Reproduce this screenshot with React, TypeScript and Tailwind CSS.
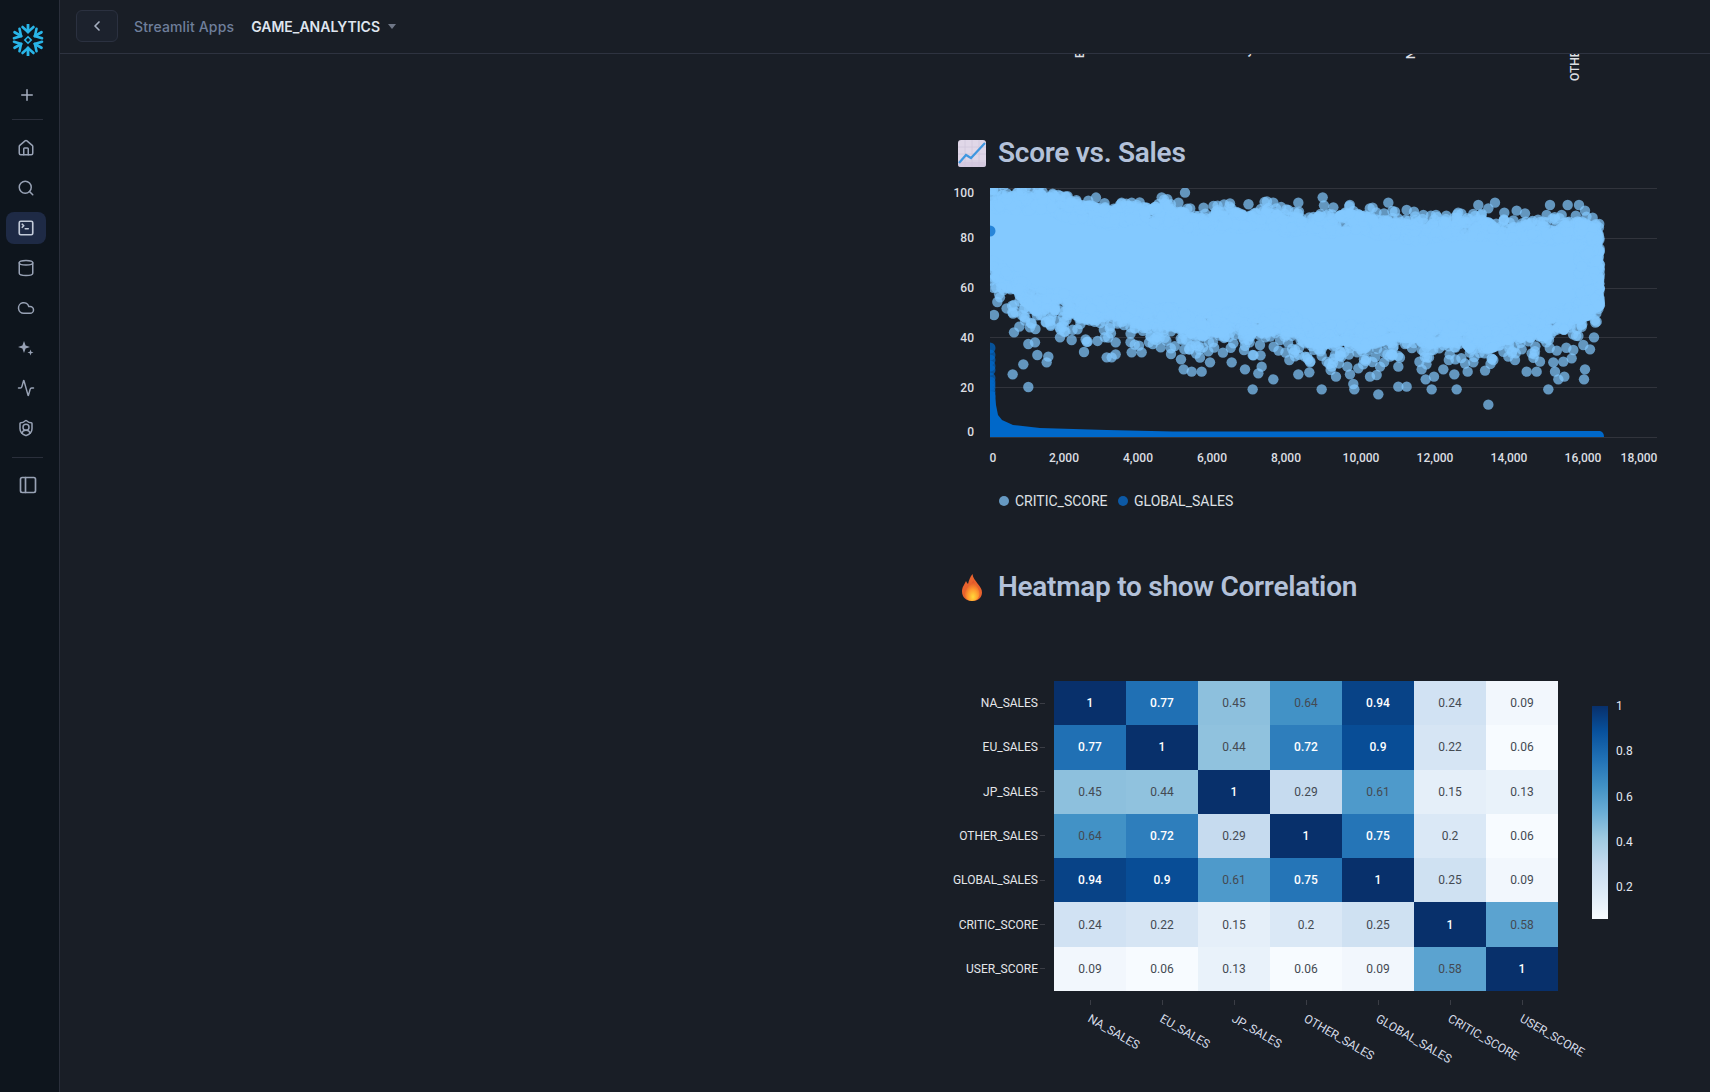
import { Activity, ChevronLeft, Cloud, Cylinder, House, PanelLeft, Plus, Search, ShieldUser, SquareTerminal } from "lucide-react"

// seeded so the cloud comes out the same on every load
function makeRandom(seed: number) {
	return () => {
		seed |= 0
		seed = (seed + 0x6d2b79f5) | 0
		let t = Math.imul(seed ^ (seed >>> 15), 1 | seed)
		t = (t + Math.imul(t ^ (t >>> 7), 61 | t)) ^ t
		return ((t ^ (t >>> 14)) >>> 0) / 4294967296
	}
}

const lerpTable = (table: number[][], x: number) => {
	for (let i = 1; i < table.length; i++) {
		if (x <= table[i][0]) {
			const [x0, y0] = table[i - 1]
			const [x1, y1] = table[i]
			return y0 + ((y1 - y0) * (x - x0)) / (x1 - x0)
		}
	}
	return table[table.length - 1][1]
}

const TOP_EDGE = [[990, 192], [1060, 200], [1100, 206], [1200, 212], [1340, 216], [1400, 222], [1500, 224], [1590, 226], [1604, 232]]
const BOTTOM_EDGE = [[990, 280], [1010, 290], [1040, 303], [1100, 320], [1200, 328], [1300, 337], [1400, 342], [1500, 342], [1570, 330], [1590, 312], [1604, 296]]

const topEdge = (x: number) => lerpTable(TOP_EDGE, x) + 2.5 * Math.sin(x / 17) + 1.5 * Math.sin(x / 7)
const bottomEdge = (x: number) => lerpTable(BOTTOM_EDGE, x) + 4 * Math.sin(x / 23) + 3 * Math.sin(x / 9)

function buildCloud() {
	const rnd = makeRandom(42)
	const pts: [number, number][] = []
	// dense rim, which hides the outline of the solid part
	for (let i = 0; i < 1100; i++) {
		const x = 990 + rnd() * 610
		pts.push([x, topEdge(x) + rnd() * 16])
	}
	for (let i = 0; i < 1300; i++) {
		const x = 990 + rnd() * 610
		pts.push([x, bottomEdge(x) - 18 + rnd() * 20])
	}
	// thinning out past the rim
	for (let i = 0; i < 200; i++) {
		const x = 990 + rnd() * 610
		pts.push([x, topEdge(x) - 10 * rnd() ** 2])
	}
	for (let i = 0; i < 420; i++) {
		const x = 990 + rnd() * 610
		pts.push([x, bottomEdge(x) + 24 * rnd() ** 2])
	}
	// right end of the cloud
	for (let i = 0; i < 420; i++) {
		const x = 1578 + rnd() * 22
		const a = topEdge(x)
		const b = bottomEdge(x)
		pts.push([x, a + rnd() * (b - a)])
	}
	return pts
}

// solid middle of the cloud, where the points merge completely
function bodyPath() {
	const xs: number[] = []
	for (let x = 990; x <= 1586; x += 12) xs.push(x)
	const top = xs.map((x) => `${x} ${lerpTable(TOP_EDGE, x) + 10}`)
	const bottom = xs.reverse().map((x) => `${x} ${lerpTable(BOTTOM_EDGE, x) - 10}`)
	return `M${top.join(" L")} L${bottom.join(" L")} Z`
}

const ZOOM_A = [[735,38],[1148,52],[1152,76],[1180,82],[1075,68],[1045,90],[665,52],[355,45],[870,70],[575,68],[545,68],[445,62],[640,85],[685,75],[162,405],[180,352],[217,397],[222,457],[238,440],[245,405],[270,442],[265,492],[285,487],[395,480],[360,472],[292,525],[325,530],[320,547],[250,553],[218,583],[265,621],[432,516],[443,485],[500,532],[527,487],[527,523],[515,532],[575,517],[605,517],[597,497],[627,487],[650,480],[693,522],[723,538],[731,568],[733,508],[755,575],[785,575],[780,533],[810,547],[789,502],[875,547],[915,568],[912,510],[938,525],[965,560],[955,580],[938,628],[1000,598],[1048,540],[1075,583],[1108,577],[1110,547],[1095,530],[1145,628],[1160,545],[1172,570],[1188,590],[1175,560],[1185,525],[838,467],[880,490],[925,480],[960,495],[1020,480],[1065,510],[1095,490],[1135,508]]
const ZOOM_B = [[445,674],[115,643],[43,628],[40,612],[90,590],[110,585],[175,620],[200,620],[275,628],[257,598],[282,590],[350,628],[343,583],[310,568],[245,568],[383,575],[400,547],[460,540],[525,540],[560,575],[590,575],[645,575],[655,598],[673,590],[625,628],[732,598],[735,568],[640,547],[670,545],[175,560],[120,560],[150,530],[22,560],[55,565],[30,583],[750,508],[730,495],[762,472],[770,425],[775,375],[710,410],[700,510],[695,535],[600,545],[575,520],[545,508],[505,530],[145,68],[465,68],[415,75],[630,75],[683,75],[717,75],[98,83],[60,110],[30,100],[165,95],[200,90],[222,95],[250,105],[288,105],[343,113],[493,98],[530,92],[555,100],[620,105],[665,105],[735,92],[758,113],[445,85],[405,108],[318,125],[235,125],[100,120]]

const cloud = buildCloud()
const strays = [
	...ZOOM_A.map(([x, y]) => [940 + x / 3, 180 + y / 3]),
	...ZOOM_B.map(([x, y]) => [1340 + x / 3, 180 + y / 3]),
]

const GRID_Y = [188, 238, 288, 337, 387, 437]
const Y_TICKS: [string, number][] = [["100", 193], ["80", 238], ["60", 288], ["40", 338], ["20", 388], ["0", 432]]
const X_TICKS: [string, number][] = [["0", 993], ["2,000", 1064], ["4,000", 1138], ["6,000", 1212], ["8,000", 1286], ["10,000", 1361], ["12,000", 1435], ["14,000", 1509], ["16,000", 1583], ["18,000", 1639]]

function ScatterChart() {
	return (
		<svg viewBox="958 181 751 340" className="w-[751px] h-[340px] block overflow-visible">
			<defs>
				<clipPath id="plot">
					<rect x="990" y="188" width="667" height="249" />
				</clipPath>
			</defs>
			{GRID_Y.map((y) => (
				<line key={y} x1="990" x2="1657" y1={y + 0.5} y2={y + 0.5} stroke="#31343c" />
			))}
			<g clipPath="url(#plot)">
				<path d={bodyPath()} fill="#83c9ff" />
				{cloud.map(([x, y], i) => (
					<circle key={i} cx={x} cy={y} r="5.2" fill="#83c9ff" opacity="0.7" />
				))}
				{strays.map(([x, y], i) => (
					<circle key={i} cx={x} cy={y} r="5.2" fill="#83c9ff" opacity="0.7" />
				))}
				{[231, 348, 355, 360, 366, 370, 378, 382, 385, 388, 392, 396].map((y) => (
					<circle key={y} cx="990" cy={y} r="5.5" fill="#0068c9" opacity="0.7" />
				))}
				<path
					d="M985 392 L995 392 L996 405 L998 415 L1002 420 L1013 425 L1040 428 L1107 430 L1173 431.5 L1600 431 Q1604 432 1604 437 L985 437 Z"
					fill="#0068c9"
				/>
			</g>
			<g className="text-[12px] font-medium" fill="#dcdee2">
				{Y_TICKS.map(([t, y]) => (
					<text key={t} x="974" y={y + 4} textAnchor="end">{t}</text>
				))}
				{X_TICKS.map(([t, x]) => (
					<text key={t} x={x} y="462" textAnchor="middle">{t}</text>
				))}
			</g>
			<circle cx="1004" cy="501" r="5" fill="#6699c2" />
			<text x="1015" y="506" fill="#dfe1e5" className="text-[14px]">CRITIC_SCORE</text>
			<circle cx="1123" cy="501" r="5" fill="#0c59a5" />
			<text x="1134" y="506" fill="#dfe1e5" className="text-[14px]">GLOBAL_SALES</text>
		</svg>
	)
}

const LABELS = ["NA_SALES", "EU_SALES", "JP_SALES", "OTHER_SALES", "GLOBAL_SALES", "CRITIC_SCORE", "USER_SCORE"]

const MATRIX = [
	["1", "0.77", "0.45", "0.64", "0.94", "0.24", "0.09"],
	["0.77", "1", "0.44", "0.72", "0.9", "0.22", "0.06"],
	["0.45", "0.44", "1", "0.29", "0.61", "0.15", "0.13"],
	["0.64", "0.72", "0.29", "1", "0.75", "0.2", "0.06"],
	["0.94", "0.9", "0.61", "0.75", "1", "0.25", "0.09"],
	["0.24", "0.22", "0.15", "0.2", "0.25", "1", "0.58"],
	["0.09", "0.06", "0.13", "0.06", "0.09", "0.58", "1"],
]

const CELL_COLOR: Record<string, string> = {
	"1": "#08306b",
	"0.94": "#084387",
	"0.9": "#084d96",
	"0.77": "#2070b4",
	"0.75": "#2575b7",
	"0.72": "#2e7ebc",
	"0.64": "#4292c6",
	"0.61": "#4e9acb",
	"0.58": "#5ba3d0",
	"0.45": "#8dc0dd",
	"0.44": "#90c2de",
	"0.29": "#c6dbef",
	"0.25": "#cfe1f2",
	"0.24": "#d1e2f3",
	"0.22": "#d6e5f4",
	"0.2": "#dae8f6",
	"0.15": "#e5eff9",
	"0.13": "#e9f2fa",
	"0.09": "#f2f7fd",
	"0.06": "#f7fbff",
}

function Heatmap() {
	return (
		<div className="flex items-start -ml-[14px]">
			<div>
				<div className="grid grid-cols-[110px_repeat(7,72px)] auto-rows-[44.29px] text-[12px]">
					{MATRIX.map((row, r) => (
						<div key={r} className="contents">
							<div className="flex items-center justify-end gap-[2px] pr-[9px] text-[#e4e6ea]">
								{LABELS[r]}
								<span className="w-[5px] h-px bg-[#3a3d45]" />
							</div>
							{row.map((v, c) => {
								const dark = parseFloat(v) >= 0.7
								return (
									<div
										key={c}
										className={`flex items-center justify-center ${dark ? "text-white font-medium" : "text-[#444a52]"}`}
										style={{ backgroundColor: CELL_COLOR[v] }}
									>
										{v}
									</div>
								)
							})}
						</div>
					))}
				</div>
				<svg viewBox="944 991 614 101" className="w-[614px] h-[101px] block overflow-visible">
					{LABELS.map((l, i) => {
						const x = 1090 + i * 72
						return (
							<g key={l}>
								<line x1={x + 0.5} x2={x + 0.5} y1="1000" y2="1005" stroke="#3a3d45" />
								<text x={x - 3} y="1021" transform={`rotate(30 ${x - 3} 1021)`} fill="#d5dbe6" className="text-[12px]">
									{l}
								</text>
							</g>
						)
					})}
				</svg>
			</div>
			<div className="ml-[34px] mt-[25px] w-4 h-[213px] bg-[linear-gradient(to_top,#f7fbff_0%,#deebf7_12%,#c6dbef_25%,#9ecae1_38%,#6baed6_50%,#4292c6_62%,#2171b5_75%,#08519c_88%,#08306b_100%)]" />
			<div className="ml-2 mt-[17px] h-[197px] flex flex-col justify-between text-[12px] leading-4 text-[#e4e9f2]">
				<span>1</span>
				<span>0.8</span>
				<span>0.6</span>
				<span>0.4</span>
				<span>0.2</span>
			</div>
		</div>
	)
}

function ChartEmoji() {
	return (
		<svg viewBox="0 0 28 27" className="w-7 h-[27px] shrink-0">
			<rect width="28" height="27" rx="3" fill="#e0d7e8" />
			<path d="M0 7h28M0 14h28M0 21h28M7 0v27M14 0v27M21 0v27" stroke="#d0c6dc" strokeWidth="0.8" />
			<rect y="22" width="28" height="5" rx="2" fill="#cfc3dc" opacity="0.7" />
			<path d="M1 23 L8 15 L13 18 L27 3" fill="none" stroke="#3f97e0" strokeWidth="2.2" />
		</svg>
	)
}

function FireEmoji() {
	return (
		<svg viewBox="0 0 20 27" className="w-5 h-[27px] shrink-0">
			<defs>
				<radialGradient id="flame" cx="0.55" cy="0.8" r="0.7">
					<stop offset="0" stopColor="#ffd93b" />
					<stop offset="0.5" stopColor="#ff9a2e" />
					<stop offset="1" stopColor="#e0552a" />
				</radialGradient>
			</defs>
			<path d="M10 27 C4 27 0 23 0 17.5 C0 13 2.5 10.5 4 7 C5 9 5.5 9.5 6 10 C7 6 8 3 10.5 0 C11 4 13 6 15.5 9.5 C18.5 13 20 15.5 20 18.5 C20 23.5 16 27 10 27 Z" fill="#e8622d" />
			<path d="M10 27 C5.5 27 3 24 3 20 C3 16 6 14 7.5 10 C9 13 10 8 11.5 6 C12 10 17.5 14 17.5 19.5 C17.5 24 14.5 27 10 27 Z" fill="url(#flame)" />
		</svg>
	)
}

function Snowflake() {
	return (
		<svg viewBox="-16 -16 32 32" className="w-8 h-8">
			{[0, 60, 120, 180, 240, 300].map((r) => (
				<g key={r} transform={`rotate(${r})`}>
					<path d="M0 -8 V-15.5" stroke="#29b5e8" strokeWidth="2.8" strokeLinecap="round" />
					<path d="M-5.5 -13 L0 -8 L5.5 -13" fill="none" stroke="#29b5e8" strokeWidth="2.6" strokeLinecap="round" />
				</g>
			))}
			<path d="M0 -3.2 L3.2 0 L0 3.2 L-3.2 0 Z" fill="none" stroke="#29b5e8" strokeWidth="1.6" />
		</svg>
	)
}

function Sidebar() {
	const iconClass = "w-[18px] h-[18px] text-[#98a2b5]"
	return (
		<aside className="w-[60px] h-full shrink-0 bg-[#0e151d] border-r border-[#2a2f3b] flex flex-col font-[family-name:Inter,sans-serif]">
			<div className="h-[80px] pl-3 pt-6">
				<Snowflake />
			</div>
			<div className="h-[30px] pl-[18px] flex items-center">
				<Plus className="w-[18px] h-[18px] text-[#a6afc0]" />
			</div>
			<div className="mx-3 mt-[9px] h-px w-[31px] bg-[#2a2f3b]" />
			<nav className="mt-[8px] pl-[6px] flex flex-col">
				<div className="w-10 h-10 flex items-center justify-center"><House className={iconClass} /></div>
				<div className="w-10 h-10 flex items-center justify-center"><Search className={iconClass} /></div>
				<div className="w-10 h-10 flex items-center justify-center">
					<div className="w-10 h-8 rounded-lg bg-[#1e2a45] flex items-center justify-center">
						<SquareTerminal className="w-[18px] h-[18px] text-[#c2cad8]" strokeWidth={2.2} />
					</div>
				</div>
				<div className="w-10 h-10 flex items-center justify-center"><Cylinder className={iconClass} /></div>
				<div className="w-10 h-10 flex items-center justify-center"><Cloud className={iconClass} /></div>
				<div className="w-10 h-10 flex items-center justify-center">
					<svg viewBox="0 0 18 18" className="w-[18px] h-[18px]" fill="#98a2b5">
						<path d="M7 2 L8.6 6.4 L13 8 L8.6 9.6 L7 14 L5.4 9.6 L1 8 L5.4 6.4 Z" />
						<path d="M13.5 10.5 L14.3 12.7 L16.5 13.5 L14.3 14.3 L13.5 16.5 L12.7 14.3 L10.5 13.5 L12.7 12.7 Z" />
					</svg>
				</div>
				<div className="w-10 h-10 flex items-center justify-center"><Activity className={iconClass} /></div>
				<div className="w-10 h-10 flex items-center justify-center"><ShieldUser className={iconClass} /></div>
			</nav>
			<div className="mx-3 mt-[9px] h-px w-[31px] bg-[#2a2f3b]" />
			<div className="mt-[17px] pl-[18px]">
				<PanelLeft className="w-[20px] h-[20px] text-[#98a2b5]" />
			</div>
		</aside>
	)
}

function TopBar() {
	return (
		<header className="h-[54px] shrink-0 border-b border-[#2e3340] flex items-center pl-4 pb-[1px] bg-[#191e26] font-[family-name:Inter,sans-serif] text-[14px]">
			<button className="w-[42px] h-[32px] rounded-md border border-[#2b3140] bg-[#1c222d] flex items-center justify-center">
				<ChevronLeft className="w-4 h-4 text-[#a6afc0]" strokeWidth={2.5} />
			</button>
			<span className="ml-4 font-medium tracking-[0.15px] text-[#6f7f9b]">Streamlit Apps</span>
			<span className="ml-[17px] font-semibold text-[#dfe5ef]">GAME_ANALYTICS</span>
			<span className="ml-2 w-0 h-0 border-x-[4px] border-x-transparent border-t-[5px] border-t-[#6f7787]" />
		</header>
	)
}

export default function App() {
	return (
		<div className="w-[1710px] h-[1092px] flex overflow-hidden bg-[#191e26] font-[family-name:Roboto,sans-serif]">
			<Sidebar />
			<div className="flex-1 flex flex-col min-w-0">
				<TopBar />
				<main className="flex-1 flex overflow-hidden">
					<div className="w-[898px] shrink-0" />
					<section className="w-[752px]">
						{/* labels of the previous chart, scrolled under the top bar */}
						<svg viewBox="958 54 752 71" className="w-[752px] h-[71px] block">
							<g fill="#dcdee2" className="text-[12px] font-medium">
								<text transform="translate(1084 58) rotate(-90)">EU_SALES</text>
								<text transform="translate(1251 57) rotate(-90)">JP_SALES</text>
								<text transform="translate(1415 59) rotate(-90)">NA_SALES</text>
								<text transform="translate(1579 81) rotate(-90)">OTHER_SALES</text>
							</g>
						</svg>
						<div className="h-[56px] flex items-center">
							<ChartEmoji />
							<h3 className="ml-3 text-[28px] font-semibold tracking-[-0.27px] text-[#b3c1d9]">Score vs. Sales</h3>
						</div>
						<ScatterChart />
						<div className="mt-[38px] h-[56px] flex items-center pl-1">
							<FireEmoji />
							<h3 className="ml-[16px] text-[28px] font-semibold tracking-[-0.27px] text-[#b3c1d9]">Heatmap to show Correlation</h3>
						</div>
						<div className="mt-[66px]">
							<Heatmap />
						</div>
					</section>
				</main>
			</div>
		</div>
	)
}
